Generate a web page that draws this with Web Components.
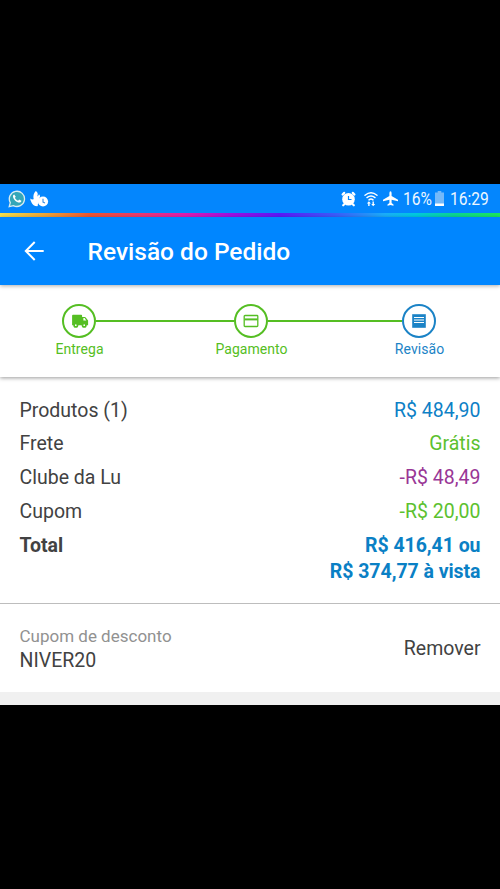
<!DOCTYPE html>
<html lang="pt-BR">
<head>
<meta charset="utf-8">
<title>Revisão do Pedido</title>
<style>
html,body{margin:0;padding:0;background:#000}
body{width:500px;height:889px;overflow:hidden;font-family:Roboto,"Liberation Sans",sans-serif;color:#424242}
</style>
</head>
<body>
<order-screen>
  <status-bar battery="16%" time="16:29"></status-bar>
  <app-bar>Revisão do Pedido</app-bar>
  <step-progress>
    <step-item icon="truck">Entrega</step-item>
    <step-line style="flex-grow:138"></step-line>
    <step-item icon="card">Pagamento</step-item>
    <step-line style="flex-grow:134"></step-line>
    <step-item icon="doc" style="--c:#1b83c6">Revisão</step-item>
  </step-progress>
  <order-summary>
    <price-row style="--c:#0d80c6">Produtos (1)<span slot="value">R$ 484,90</span></price-row>
    <price-row style="--c:#5cc12f">Frete<span slot="value">Grátis</span></price-row>
    <price-row style="--c:#993696">Clube da Lu<span slot="value">-R$ 48,49</span></price-row>
    <price-row style="--c:#5cc12f">Cupom<span slot="value">-R$ 20,00</span></price-row>
    <price-row style="--c:#0a80c5;font-weight:700;--vs:-.05px">Total<span slot="value">R$ 416,41 ou<br>R$ 374,77 à vista</span></price-row>
  </order-summary>
  <coupon-row><span slot="label">Cupom de desconto</span><span slot="code">NIVER20</span><span slot="action">Remover</span></coupon-row>
</order-screen>
<script>
function define(name, render) {
  customElements.define(name, class extends HTMLElement {
    constructor() {
      super();
      this.attachShadow({mode: 'open'}).innerHTML = render(this);
    }
  });
}
const icons = {
  truck: `<svg width="18" height="16" viewBox="0 0 18 16" style="margin-left:2px"><path fill="currentColor" d="M2 1.800h8.200q.9 0 .9.900v1.200h2.600q.6 0 1 .5l2.400 3.200v4.600H1.100V2.700q0-.9.9-.9z"/><path fill="#fff" d="M12.400 5h1.200l1.700 2.400h-2.900z"/><circle cx="4.800" cy="12.200" r="1.700" fill="#fff" stroke="currentColor" stroke-width="1.700"/><circle cx="13.200" cy="12.200" r="1.700" fill="#fff" stroke="currentColor" stroke-width="1.700"/></svg>`,
  card: `<svg width="16" height="14" viewBox="0 0 16 14"><rect x="1.200" y="1.500" width="13.600" height="11" rx=".8" fill="none" stroke="currentColor" stroke-width="1.300"/><path fill="currentColor" d="M1.500 4.400h13v2h-13z"/></svg>`,
  doc: `<svg width="14" height="14" viewBox="0 0 14 14"><path fill="currentColor" d="M.2.2h13.600v13.600H.2z"/><path stroke="#fff" stroke-width="1" d="M2 3.500h10M2 6h10M2 8.500h10"/></svg>`
};

define('order-screen', () => `<style>
:host{display:flex;flex-direction:column;box-sizing:border-box;margin-top:184px;height:521px;background:#f0f0f0}
</style><slot></slot>`);

define('status-bar', el => `<style>
:host{display:block;background:#0486fd;color:#eef7ff}
.bar{display:flex;align-items:center;height:29px;padding:0 11px 0 8px;box-sizing:border-box}
.rainbow{height:4px;background:linear-gradient(90deg,#f4e04d 0,#eea536 9%,#ee5530 18%,#ea3a70 28%,#e01cb0 37%,#a010e0 46%,#5b18f8 56%,#3c5cfa 67%,#1aaefa 77%,#00c9e0 83%,#0bd690 91%,#1be85c 100%)}
svg{display:block;flex:none}
.gap{flex:1}
span{font-size:17.500px;line-height:29px;margin-top:1px;white-space:nowrap;transform:scaleX(.89);transform-origin:left}
.pct{width:30px;margin-left:5px}
.time{width:39.500px;margin-left:5.500px}
</style><div class="bar">
<svg width="18" height="18" viewBox="0 0 18 18"><path d="M1.200 16.700l1.100-4.100A7.600 7.600 0 1 1 5.400 15.600z" fill="#35a7b8" stroke="#d9edf0" stroke-width="1.300"/><path d="M6.200 4.500c-.6.1-1.400.9-1.200 2.200.4 2.900 3.500 5.700 6.300 5.900 1.300 0 2.100-.9 2.100-1.800l-2.300-1.200-1 1.200C8.700 10.300 7.500 9.200 6.900 7.800l.9-1.100z" fill="#fff"/></svg>
<svg width="19" height="18" viewBox="0 0 19 18" style="margin-left:4px"><path fill="#fff" d="M5.800 1C7.800 2.300 8.200 4 7.300 6.400 8.200 6 8.700 5.100 8.900 4.200c1.300 1 1.500 2.500.6 3.900L7.800 14.600C8 15.900 7.700 16.300 7.200 16.300 4.500 16.100 2.500 14.800 1.500 12.500.8 10.800.3 10.200.3 8.600c1.200.9 2 1 3.400.7C2.900 6 3.600 3 5.800 1z"/><circle cx="13" cy="11.500" r="5.100" fill="#fff"/><path d="M13 8.800v3.300l2 .8" fill="none" stroke="#398de0" stroke-width="1.100"/></svg>
<div class="gap"></div>
<svg width="15" height="16" viewBox="0 0 15 16"><g fill="none" stroke="#fff"><path stroke-width="2.200" stroke-linecap="round" d="M1.600 3.500l1.600-1.600M13.400 3.500l-1.600-1.600M3.200 13.300l-1 1M11.800 13.300l1 1"/></g><circle cx="7.500" cy="8.200" r="6.300" fill="#fff"/><path d="M7.500 5v3.500h3" fill="none" stroke="#0486fd" stroke-width="1.200"/></svg>
<svg width="14" height="16" viewBox="0 0 14 16" style="margin-left:8px"><g fill="none" stroke="#fff" stroke-linecap="round" stroke-width="1.400"><path d="M1 4.200Q7-.8 13 4.200M3 6.600Q7 3.300 11 6.600M5 8.900Q7 7.200 9 8.900"/></g><path fill="#fff" d="M4.900 10.200l2 2.300H5.600V15H4.200v-2.500H2.900zM9.200 15.300l-2-2.300h1.300v-2.500h1.400V13h1.300z"/></svg>
<svg width="15" height="15" viewBox="0 0 15 15" style="margin-left:5px"><path fill="#fff" d="M7.500.2q1.100 0 1.100 2v2.900L15 8.800v1.500L8.600 8.700v3.400l1.900 1.500v1.200l-3-.8-3 .8v-1.200l1.900-1.500V8.700L0 10.300V8.800l6.400-3.700V2.200q0-2 1.100-2z"/></svg>
<span class="pct">${el.getAttribute('battery')}</span>
<svg width="9" height="15" viewBox="0 0 9 15" style="margin-left:2px"><path fill="#75b9f9" d="M2.700 0h3.600v1.500H9V15H0V1.500h2.700z"/><path fill="#fff" d="M0 12.500h9V15H0z"/></svg>
<span class="time">${el.getAttribute('time')}</span>
</div><div class="rainbow"></div>`);

define('app-bar', () => `<style>
:host{display:flex;align-items:center;height:68px;padding-left:24px;background:#0086ff;color:#fff;box-shadow:0 1px 4px #0005;z-index:2;flex:none}
svg{flex:none;display:block}
h1{margin:2px 0 0 43.500px;font-weight:500;font-size:24.500px;line-height:32px;white-space:nowrap}
</style><svg width="20" height="20" viewBox="0 0 20 20" fill="none" stroke="currentColor" stroke-width="2"><path d="M19.700 10H2M10.700 1L1.800 10l8.900 9"/></svg><h1><slot></slot></h1>`);

define('step-progress', () => `<style>
:host{display:flex;align-items:flex-start;height:91.500px;box-sizing:border-box;padding:19px 64px 0 62px;background:#fff;box-shadow:0 1px 4px #0006;z-index:1;flex:none}
</style><slot></slot>`);

define('step-line', () => `<style>
:host{display:block;flex:1 1 0;height:2px;margin-top:16px;background:#55be23}
</style>`);

define('step-item', el => `<style>
:host{display:flex;flex-direction:column;align-items:center;width:34px;flex:none;color:var(--c,#55be23)}
.ring{display:flex;align-items:center;justify-content:center;box-sizing:border-box;width:34px;height:34px;border:2px solid;border-radius:50%}
.label{margin-top:1px;font-size:14px;line-height:20px;letter-spacing:.05px;padding-left:1px;white-space:nowrap}
svg{display:block}
</style><div class="ring">${icons[el.getAttribute('icon')]}</div><div class="label"><slot></slot></div>`);

define('order-summary', () => `<style>
:host{display:flex;flex-direction:column;gap:7.800px;height:227.500px;box-sizing:border-box;padding:21px 19.500px 0;background:#fff;border-bottom:1px solid #bdbdbd;flex:none}
</style><slot></slot>`);

define('price-row', () => `<style>
:host{display:flex;justify-content:space-between;font-size:19.500px;line-height:26px}
.value{color:var(--c);text-align:right;letter-spacing:var(--vs,0)}
</style><span><slot></slot></span><span class="value"><slot name="value"></slot></span>`);

define('coupon-row', () => `<style>
:host{display:flex;align-items:center;justify-content:space-between;height:88px;box-sizing:border-box;padding:2px 19.500px 0;background:#fff;font-size:19.500px;line-height:26px;flex:none}
.info{display:flex;flex-direction:column}
.label{color:#919191;font-size:17px;line-height:24px}
</style><div class="info"><span class="label"><slot name="label"></slot></span><span><slot name="code"></slot></span></div><slot name="action"></slot>`);
</script>
</body>
</html>
